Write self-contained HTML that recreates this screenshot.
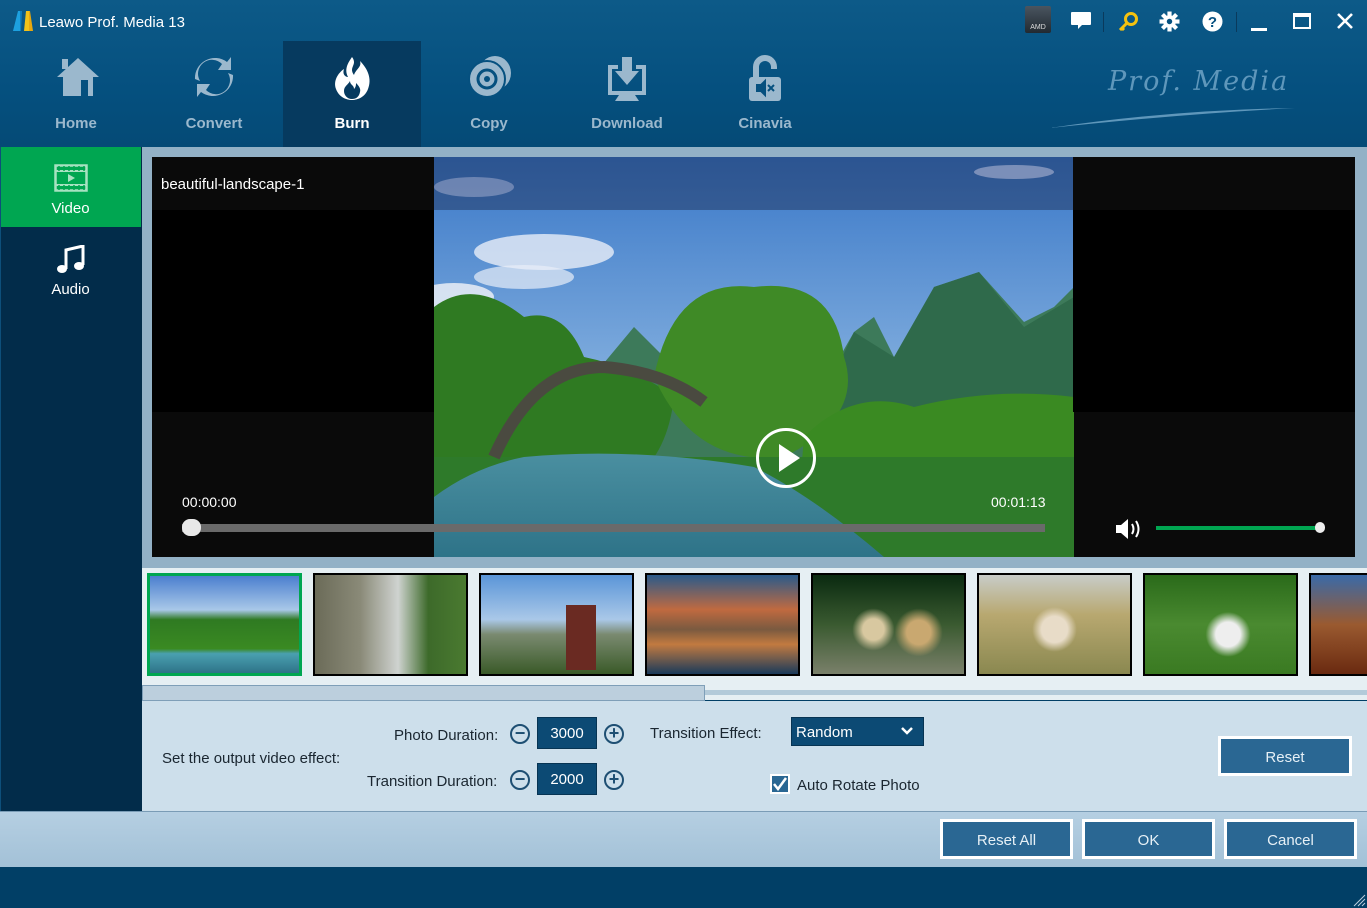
<!DOCTYPE html>
<html><head><meta charset="utf-8"><style>
*{margin:0;padding:0;box-sizing:border-box}
body{width:1367px;height:908px;overflow:hidden;font-family:"Liberation Sans",sans-serif;background:#013f66;position:relative}
.abs{position:absolute}
.top{left:0;top:0;width:1367px;height:147px;background:linear-gradient(#0d5a88,#05507f 60%,#054a76)}
.tb{position:absolute;top:41px;width:138px;height:106px;color:#9bb8cd;font-weight:bold;font-size:15px;text-align:center}
.tb .l{position:absolute;top:74px;width:100%}
.tb svg{position:absolute;left:47px;top:14px}
.side{left:0;top:147px;width:142px;height:664px;background:#022c4a;border-left:1px solid #0d4f7a}
.btn{position:absolute;background:#2a6793;border:3px solid #fff;color:#e6f0f6;font-size:15px;text-align:center}
.lab{position:absolute;font-size:15px;color:#1a2630}
.num{position:absolute;width:60px;height:32px;background:#0c4a74;color:#fff;font-size:15px;text-align:center;line-height:32px;border:1px solid #073453}
.pm{position:absolute;width:20px;height:20px;border:2.5px solid #1e4f73;border-radius:50%;color:#1e4f73;font-size:18px;line-height:14px;text-align:center;font-weight:bold}
.th{position:absolute;top:573px;width:155px;height:103px;border:2px solid #000;overflow:hidden}
</style></head><body>
<div class="abs top"></div>
<div class="abs" style="left:13px;top:11px;width:20px;height:20px;background:linear-gradient(90deg,#1da1e0 0 35%,#0f7fc0 35% 50%,#f2c21a 50% 80%,#e7a80f 80%);clip-path:polygon(0 100%,25% 0,45% 0,40% 100%,55% 100%,65% 0,85% 0,100% 100%)"></div>
<div class="abs" style="left:39px;top:14px;color:#fff;font-size:15px">Leawo Prof. Media 13</div>
<div class="abs" style="left:1025px;top:6px;width:26px;height:27px;background:linear-gradient(#4a5560,#222a31);border-radius:2px;color:#ddd;font-size:7px;text-align:center;padding-top:18px">AMD</div>
<svg class="abs" style="left:1070px;top:11px" width="22" height="20"><path d="M2 1h18a1 1 0 0 1 1 1v11a1 1 0 0 1-1 1h-8l-4 4v-4H2a1 1 0 0 1-1-1V2a1 1 0 0 1 1-1z" fill="#fff"/></svg>
<div class="abs" style="left:1103px;top:12px;width:1px;height:20px;background:#0a3a5c"></div>
<svg class="abs" style="left:1117px;top:11px" width="22" height="20"><circle cx="14" cy="8" r="5.5" fill="none" stroke="#f5c20f" stroke-width="3"/><path d="M10 12L3 19M5 17l2 2" stroke="#f5c20f" stroke-width="3"/></svg>
<svg class="abs" style="left:1159px;top:11px" width="21" height="21" viewBox="0 0 20 20"><g fill="#fff"><circle cx="10" cy="10" r="6"/><rect x="8" y="0.5" width="4" height="19"/><rect x="0.5" y="8" width="19" height="4"/><rect x="8" y="0.5" width="4" height="19" transform="rotate(45 10 10)"/><rect x="8" y="0.5" width="4" height="19" transform="rotate(-45 10 10)"/></g><circle cx="10" cy="10" r="2.6" fill="#05507f"/></svg>
<svg class="abs" style="left:1202px;top:11px" width="21" height="21"><circle cx="10.5" cy="10.5" r="10" fill="#fff"/><text x="10.5" y="16" font-size="15" font-weight="bold" text-anchor="middle" fill="#065080" font-family="Liberation Sans">?</text></svg>
<div class="abs" style="left:1236px;top:12px;width:1px;height:20px;background:#0a3a5c"></div>
<div class="abs" style="left:1251px;top:28px;width:16px;height:3px;background:#fff"></div>
<div class="abs" style="left:1293px;top:13px;width:18px;height:16px;border:2.5px solid #fff;border-top-width:4px"></div>
<svg class="abs" style="left:1336px;top:12px" width="18" height="18"><path d="M2 2l14 14M16 2L2 16" stroke="#fff" stroke-width="2.6"/></svg>
<div class="tb" style="left:7px"><svg width="48" height="44" viewBox="0 0 48 44"><path d="M24 3L3 22h6v19h30V22h6z" fill="#9bb8cd"/><rect x="8" y="4" width="6" height="10" fill="#9bb8cd"/><rect x="27" y="25" width="7" height="16" fill="#05507f"/></svg><div class="l">Home</div></div>
<div class="tb" style="left:145px"><svg width="44" height="44" viewBox="0 0 44 44"><path d="M8 26A14 14 0 0 1 30 9l-4 6h13V2l-4 5A20 20 0 0 0 3 24z" fill="#9bb8cd"/><path d="M36 18A14 14 0 0 1 14 35l4-6H5v13l4-5a20 20 0 0 0 32-17z" fill="#9bb8cd"/></svg><div class="l">Convert</div></div>
<div class="tb" style="left:283px;background:#063a5f;color:#fff"><svg width="44" height="46" viewBox="0 0 44 46"><path d="M22 2c6 8-4 10 2 18 2-6 8-8 6-14 8 8 12 18 8 28-3 8-10 11-16 11S9 42 6 34C3 26 8 18 14 14c-2 6 2 8 4 8-4-8 0-14 4-20z" fill="#fff"/><path d="M22 44c-5 0-8-4-8-8 0-5 4-6 6-10 0 4 4 4 4 8 2-2 2-4 2-6 3 3 5 6 4 9-1 5-4 7-8 7z" fill="#063a5f"/></svg><div class="l">Burn</div></div>
<div class="tb" style="left:420px"><svg width="46" height="44" viewBox="0 0 46 44"><ellipse cx="28" cy="18" rx="16" ry="17" fill="#9bb8cd"/><circle cx="20" cy="24" r="18" fill="#9bb8cd" stroke="#05507f" stroke-width="2"/><circle cx="20" cy="24" r="9" fill="none" stroke="#05507f" stroke-width="3"/><circle cx="20" cy="24" r="3" fill="#05507f"/></svg><div class="l">Copy</div></div>
<div class="tb" style="left:558px"><svg width="44" height="46" viewBox="0 0 44 46"><path d="M3 10h10v4H7v22h30V14h-6v-4h10v30H3z" fill="#9bb8cd"/><path d="M17 2h10v14h7L22 30 10 16h7z" fill="#9bb8cd"/><path d="M14 40h16l4 6H10z" fill="#9bb8cd"/></svg><div class="l">Download</div></div>
<div class="tb" style="left:696px"><svg width="44" height="48" viewBox="0 0 44 48"><path d="M10 22V12a12 12 0 0 1 24 0v2h-6v-2a6 6 0 0 0-12 0v10z" fill="#9bb8cd"/><rect x="6" y="22" width="32" height="24" rx="3" fill="#9bb8cd"/><path d="M14 30h4l4-4v14l-4-4h-4z M25 30l6 6M31 30l-6 6" fill="#05507f" stroke="#05507f" stroke-width="2"/></svg><div class="l">Cinavia</div></div>
<div class="abs" style="left:1108px;top:66px;font-family:'DejaVu Serif',serif;font-style:italic;font-size:27px;color:#5f97bb;letter-spacing:2px">Prof. Media</div>
<svg class="abs" style="left:1050px;top:104px" width="250" height="28"><path d="M0 24Q120 6 245 4Q130 10 0 24" fill="#5f97bb"/></svg>
<div class="abs side"></div>
<div class="abs" style="left:1px;top:147px;width:140px;height:80px;background:#00a651"></div>
<svg class="abs" style="left:54px;top:164px" width="34" height="28"><rect x="1.5" y="1.5" width="31" height="25" fill="none" stroke="#a7e2c1" stroke-width="2.5"/><path d="M1 7h32M1 21h32" stroke="#a7e2c1" stroke-width="2"/><path d="M5 2v5M10 2v5M15 2v5M20 2v5M25 2v5M30 2v5M5 21v5M10 21v5M15 21v5M20 21v5M25 21v5M30 21v5" stroke="#00a651" stroke-width="1.5"/><path d="M14 10l7 4-7 4z" fill="#a7e2c1"/></svg>
<div class="abs" style="left:0;top:200px;width:141px;text-align:center;color:#fff;font-size:15px">Video</div>
<svg class="abs" style="left:56px;top:245px" width="30" height="30"><path d="M10 24V5l17-4v19" fill="none" stroke="#fff" stroke-width="3"/><ellipse cx="6" cy="24" rx="5" ry="4" fill="#fff"/><ellipse cx="23" cy="21" rx="5" ry="4" fill="#fff"/></svg>
<div class="abs" style="left:0;top:281px;width:141px;text-align:center;color:#fff;font-size:15px">Audio</div>
<div class="abs" style="left:142px;top:147px;width:1225px;height:421px;background:#93b1c6"></div>
<div class="abs" style="left:152px;top:157px;width:1203px;height:400px;background:#0a0a0a;overflow:hidden">
<svg class="abs" style="left:282px;top:0" width="640" height="400" viewBox="0 0 640 400">
<defs><linearGradient id="sky" x1="0" y1="0" x2="0" y2="1"><stop offset="0" stop-color="#3a78c8"/><stop offset="1" stop-color="#b9d8ef"/></linearGradient>
<linearGradient id="w" x1="0" y1="0" x2="0" y2="1"><stop offset="0" stop-color="#4a8fa0"/><stop offset="1" stop-color="#2e7388"/></linearGradient></defs>
<rect width="640" height="400" fill="url(#sky)"/>
<ellipse cx="110" cy="95" rx="70" ry="18" fill="#e8eef8" opacity=".8"/><ellipse cx="90" cy="120" rx="50" ry="12" fill="#e8eef8" opacity=".7"/><ellipse cx="20" cy="140" rx="40" ry="14" fill="#f2f4f8" opacity=".8"/>
<path d="M150 230L200 170 240 210 300 160 340 150 400 210 420 175 440 160 470 220 500 130 545 115 590 165 620 150 640 130V320H150z" fill="#3d7a5a"/>
<path d="M380 260L420 175 460 200 500 130 545 115 590 170 640 140V330H380z" fill="#2f6a4b"/>
<path d="M0 150Q40 120 90 160 130 150 150 200 200 210 240 240 230 330 150 340H0z" fill="#2f7a22"/>
<path d="M220 220Q240 120 320 130 400 120 410 200 430 260 350 300 260 310 220 220z" fill="#3f8a26"/>
<path d="M370 280Q420 230 480 250 560 230 640 240V400H360z" fill="#3a8a22"/>
<path d="M0 300L640 300V400H0z" fill="#2e7a2a"/>
<path d="M90 300Q200 290 320 310 380 340 450 400H0V340Q40 310 90 300z" fill="url(#w)"/>
<path d="M60 300Q100 210 170 210 230 215 270 245" fill="none" stroke="#4a4a40" stroke-width="12"/>
<rect x="0" y="0" width="640" height="53" fill="#1a2a50" opacity=".45"/>
<ellipse cx="40" cy="30" rx="40" ry="10" fill="#c8c8e0" opacity=".4"/><ellipse cx="580" cy="15" rx="40" ry="7" fill="#c8c8e0" opacity=".5"/>
</svg>
<div class="abs" style="left:0;top:0;width:282px;height:53px;background:#0a0a0a"></div>
<div class="abs" style="left:921px;top:0;width:282px;height:53px;background:#0a0a0a"></div>
<div class="abs" style="left:9px;top:19px;color:#fff;font-size:15px">beautiful-landscape-1</div>
<div class="abs" style="left:0;top:53px;width:282px;height:202px;background:#000"></div>
<div class="abs" style="left:921px;top:53px;width:282px;height:202px;background:#000"></div>
<svg class="abs" style="left:603px;top:270px" width="62" height="62"><circle cx="31" cy="31" r="28.5" fill="none" stroke="#fff" stroke-width="3"/><path d="M24 17l21 14-21 14z" fill="#fff"/></svg>
<div class="abs" style="left:30px;top:337px;color:#fff;font-size:14px">00:00:00</div>
<div class="abs" style="left:839px;top:337px;color:#fff;font-size:14px">00:01:13</div>
<div class="abs" style="left:30px;top:367px;width:863px;height:8px;background:#6a6a6a"></div>
<div class="abs" style="left:30px;top:362px;width:19px;height:17px;background:#e8e8e8;border-radius:8px"></div>
<svg class="abs" style="left:963px;top:360px" width="30" height="24"><path d="M1 8h5l7-6v20l-7-6H1z" fill="#fff"/><path d="M17 7q3 5 0 10M21 4q5 8 0 16" fill="none" stroke="#fff" stroke-width="2"/></svg>
<div class="abs" style="left:1004px;top:369px;width:164px;height:4px;background:#00a651"></div>
<div class="abs" style="left:1163px;top:365px;width:10px;height:11px;background:#eee;border-radius:5px"></div>
</div>
<div class="abs" style="left:142px;top:568px;width:1225px;height:118px;background:#e6eff3"></div>
<div class="th" style="left:147px;border:3px solid #00a651;background:linear-gradient(#4b7fcf 0,#a9c8e8 35%,#2f7a22 45%,#3a8a22 75%,#4aa0b0 80%,#2e7388);"></div>
<div class="th" style="left:313px;background:linear-gradient(90deg,#6b6b58,#8a8a78 30%,#cfd3d0 55%,#3d6a2a 75%,#4a7a30)"></div>
<div class="th" style="left:479px;background:linear-gradient(#5a95d8,#aac8e8 45%,#7a8a70 60%,#3a5a28)"><div class="abs" style="left:85px;top:30px;width:30px;height:65px;background:#6a2a22"></div></div>
<div class="th" style="left:645px;background:linear-gradient(#2a5a8a,#c06a40 35%,#7a5a40 55%,#c27a40 70%,#1a3a5a)"></div>
<div class="th" style="left:811px;background:radial-gradient(circle at 40% 55%,#d8c8a0 10%,transparent 20%),radial-gradient(circle at 70% 58%,#c9a870 10%,transparent 20%),linear-gradient(#0a2a10,#3a5a30 50%,#7a806a)"></div>
<div class="th" style="left:977px;background:radial-gradient(circle at 50% 55%,#e8dcc8 14%,transparent 24%),linear-gradient(#c8ccc8,#b8a870 40%,#8a8850)"></div>
<div class="th" style="left:1143px;background:radial-gradient(circle at 55% 60%,#eee 12%,transparent 22%),linear-gradient(#2a6a1a,#4a8a30 50%,#3a7a22)"></div>
<div class="th" style="left:1309px;width:60px;background:linear-gradient(#3a6aa8,#9a5a30 50%,#6a2a10)"></div>
<div class="abs" style="left:142px;top:686px;width:1225px;height:14px;background:#e6eff3"></div>
<div class="abs" style="left:705px;top:690px;width:662px;height:5px;background:#b3cad9"></div>
<div class="abs" style="left:142px;top:685px;width:563px;height:16px;background:#bccfdd;border:1px solid #7f9fb8"></div>
<div class="abs" style="left:142px;top:701px;width:1225px;height:110px;background:#cddfeb"></div>
<div class="lab" style="left:162px;top:750px">Set the output video effect:</div>
<div class="lab" style="left:394px;top:727px">Photo Duration:</div>
<div class="lab" style="left:367px;top:773px">Transition Duration:</div>
<div class="pm" style="left:510px;top:724px">−</div>
<div class="num" style="left:537px;top:717px">3000</div>
<div class="pm" style="left:604px;top:724px">+</div>
<div class="pm" style="left:510px;top:770px">−</div>
<div class="num" style="left:537px;top:763px">2000</div>
<div class="pm" style="left:604px;top:770px">+</div>
<div class="lab" style="left:650px;top:725px">Transition Effect:</div>
<div class="abs" style="left:791px;top:717px;width:133px;height:29px;background:#0c4a74;border:1px solid #073453;color:#fff;font-size:15px;padding:6px 4px">Random</div>
<svg class="abs" style="left:901px;top:727px" width="12" height="9"><path d="M1 1l5 5 5-5" fill="none" stroke="#fff" stroke-width="2.5"/></svg>
<div class="abs" style="left:770px;top:774px;width:20px;height:20px;background:#fff;padding:2px"><div style="width:16px;height:16px;background:#2a6793"></div></div>
<svg class="abs" style="left:772px;top:777px" width="16" height="14"><path d="M2 7l4 5 8-11" fill="none" stroke="#fff" stroke-width="2.5"/></svg>
<div class="lab" style="left:797px;top:777px">Auto Rotate Photo</div>
<div class="btn" style="left:1218px;top:736px;width:134px;height:40px;line-height:38px">Reset</div>
<div class="abs" style="left:0;top:811px;width:1367px;height:56px;background:linear-gradient(#b5cfe2,#a3c1d7);border-top:1px solid #7a9cb6"></div>
<div class="btn" style="left:940px;top:819px;width:133px;height:40px;line-height:38px">Reset All</div>
<div class="btn" style="left:1082px;top:819px;width:133px;height:40px;line-height:38px">OK</div>
<div class="btn" style="left:1224px;top:819px;width:133px;height:40px;line-height:38px">Cancel</div>
<svg class="abs" style="left:1352px;top:893px" width="14" height="14"><path d="M13 2L2 13M13 6L6 13M13 10L10 13" stroke="#bcd" stroke-width="1"/></svg>
</body></html>
